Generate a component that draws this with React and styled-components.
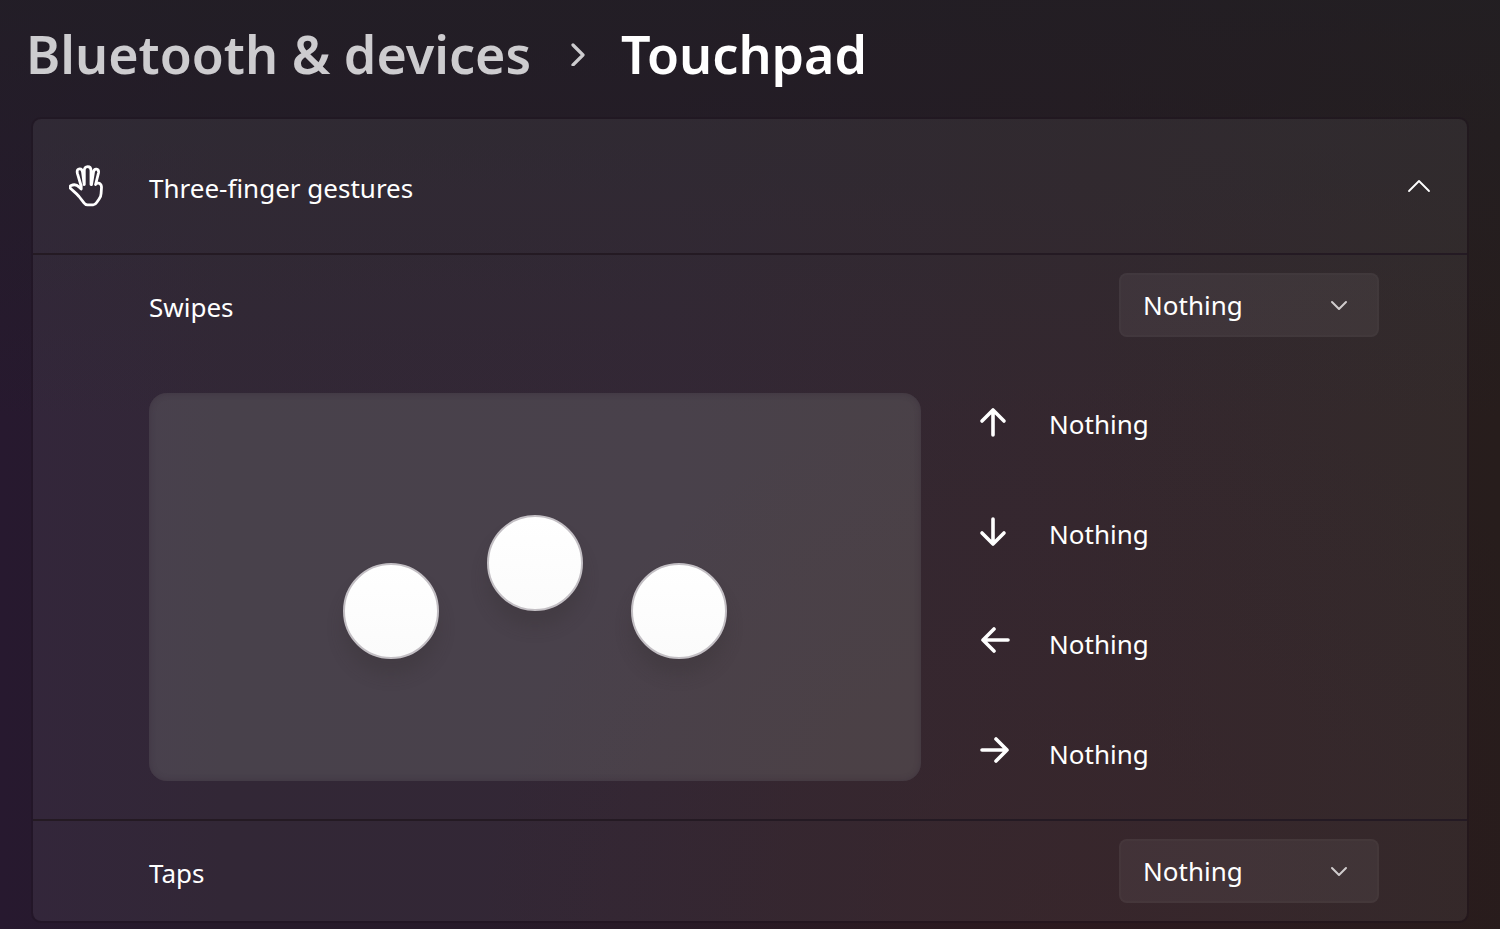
import React from "react";
import styled, { createGlobalStyle } from "styled-components";

const GlobalStyle = createGlobalStyle`
  *, *::before, *::after { box-sizing: border-box; }
  body {
    margin: 0;
    background: #261b26;
    color: #ffffff;
    font-family: "Noto Sans", "Open Sans", sans-serif;
    font-size: 26px;
    line-height: 36px;
  }
`;

const Page = styled.main`
  min-height: 100vh;
  padding: 0 33px 8px;
  background:
    linear-gradient(180deg, rgba(33, 31, 36, 0.75) 0, rgba(33, 31, 36, 0) 45%),
    radial-gradient(ellipse 40% 60% at 72% 100%, rgba(45, 25, 29, 0.7), rgba(45, 25, 29, 0) 100%),
    linear-gradient(90deg, #27192f 0%, #261a2a 15%, #271a29 45%, #281a22 72%, #271d1c 100%);
`;

const Breadcrumb = styled.nav`
  display: flex;
  align-items: center;
  height: 119px;
  margin-left: -7px;
  padding-bottom: 12px;
  gap: 36px;
  font-size: 52px;
  line-height: 72px;
  font-weight: 600;
`;

const Parent = styled.a`
  color: #cdcccf;
  text-decoration: none;
`;

const Current = styled.h1`
  margin: 0;
  font-size: inherit;
  font-weight: inherit;
`;

const Icon = styled.svg`
  display: block;
  flex: none;
  fill: none;
  stroke: currentColor;
  stroke-width: ${(p) => p.$weight || 2};
  stroke-linecap: round;
  stroke-linejoin: round;
`;

const Card = styled.section`
  border-radius: 8px;
  background: rgba(255, 255, 255, 0.06);
  box-shadow: 0 0 0 2px rgba(28, 16, 28, 0.35);
`;

const CardHeader = styled.button`
  display: flex;
  align-items: center;
  width: 100%;
  height: 134px;
  padding: 0 36px;
  gap: 44px;
  border: 0;
  background: none;
  color: inherit;
  font: inherit;
  text-align: left;
`;

const HeaderTitle = styled.span`
  flex: 1;
  padding-top: 4px;
`;

const Section = styled.div`
  padding: 18px 88px ${(p) => (p.$expanded ? 38 : 18)}px 116px;
  border-top: 2px solid #241a23;
`;

const SettingRow = styled.div`
  display: flex;
  align-items: center;
  justify-content: space-between;
`;

const Label = styled.label`
  padding-top: 4px;
`;

const SelectBox = styled.div`
  display: grid;
  align-items: center;
  width: 260px;
  height: 64px;
  color: #d0cccd;

  > * { grid-area: 1 / 1; }
  > svg { justify-self: end; margin-right: 30px; pointer-events: none; }
`;

const Select = styled.select`
  appearance: none;
  width: 100%;
  height: 100%;
  padding: 0 56px 0 22px;
  border: 2px solid rgba(255, 255, 255, 0.02);
  border-radius: 8px;
  background: rgba(255, 255, 255, 0.06);
  color: #ffffff;
  font: inherit;

  option { background: #3b3237; }
`;

const Gestures = styled.div`
  display: flex;
  gap: 58px;
  margin-top: 56px;
`;

const Pad = styled.div`
  display: flex;
  align-items: center;
  justify-content: center;
  flex: 0 1 772px;
  height: 388px;
  border-radius: 18px;
  background: rgba(126, 127, 126, 0.3);
  box-shadow: inset 0 0 6px rgba(52, 38, 53, 0.45);
`;

const Fingers = styled.div`
  display: flex;
  align-items: flex-end;
  height: 144px;
  gap: 48px;
`;

const Finger = styled.span`
  width: 96px;
  height: 96px;
  align-self: ${(p) => (p.$raised ? "flex-start" : "flex-end")};
  border: 2px solid #c3bfc4;
  border-radius: 50%;
  background: linear-gradient(#ffffff, #fbfbfb);
  box-shadow: 0 16px 16px rgba(56, 50, 54, 0.32);
`;

const Directions = styled.ul`
  display: flex;
  flex-direction: column;
  gap: 52px;
  margin: 0;
  padding: 0;
  list-style: none;
`;

const Direction = styled.li`
  display: flex;
  align-items: center;
  height: 58px;
  gap: 38px;
`;

const DirectionText = styled.span`
  padding-top: 4px;
`;

const arrows = {
  up: "M14 28V3M3 14L14 3l11 11",
  down: "M14 2v25M3 16l11 11 11-11",
  left: "M29 13H4M15 2L4 13l11 11",
  right: "M3 13h25M17 2l11 11-11 11",
};

function Arrow({ direction }) {
  return (
    <Icon width="32" height="30" viewBox="0 0 32 30" $weight={3.6} role="img" aria-label={direction}>
      <path d={arrows[direction]} />
    </Icon>
  );
}

function Hand() {
  return (
    <Icon width="36" height="44" viewBox="1 0 36 44" $weight={2.8} aria-hidden="true">
      <path d="M13 21.5L9.4 9.3C8.6 6 10 4.800 11.800 4.900c1.800.1 2.600 1.500 2.800 3.400L16.200 20.500M16.300 20.500V6.600c0-2.500 1.200-4 3.400-4s3.300 1.500 3.300 4v13.900M23.500 20.500L25.500 8c.4-2.100 1.500-3 3-2.800 1.700.3 2.300 1.700 2 3.600L27.600 20.500M27.600 20.500c1-1.500 3.300-2 4.700-.6.900.9 1.300 2 1.200 3.600l-.4 6c-.1 2-.6 3.600-1.800 5.200l-2.800 4c-.8 1.500-1.700 2.100-3.300 2.100h-5.700c-1.700 0-2.800-.8-3.700-2.100L11 32.500c-1.700-2-3.400-3.700-5.200-5.200L2.900 24.800c-1.300-1.200-1.200-2.500.2-3.200 2.400-1.200 5.800-.9 8.200 1.600L13.200 25V21.500" />
    </Icon>
  );
}

function Setting({ id, label }) {
  return (
    <SettingRow>
      <Label htmlFor={id}>{label}</Label>
      <SelectBox>
        <Select id={id} defaultValue="Nothing">
          <option>Nothing</option>
        </Select>
        <Icon width="20" height="12" viewBox="0 0 20 12" aria-hidden="true">
          <path d="M3 3l7 7 7-7" />
        </Icon>
      </SelectBox>
    </SettingRow>
  );
}

export default function App() {
  return (
    <>
      <GlobalStyle />
      <Page>
        <Breadcrumb aria-label="Breadcrumb">
          <Parent href="#devices">Bluetooth &amp; devices</Parent>
          <Icon width="18" height="24" viewBox="0 0 18 24" $weight={3.2} color="#cdcccf" aria-hidden="true">
            <path d="M6 4l10 10L6 24" transform="translate(0 -1)" />
          </Icon>
          <Current>Touchpad</Current>
        </Breadcrumb>
        <Card>
          <CardHeader type="button" aria-expanded="true">
            <Hand />
            <HeaderTitle>Three-finger gestures</HeaderTitle>
            <Icon width="24" height="14" viewBox="0 0 24 14" $weight={1.8} aria-hidden="true">
              <path d="M2 12L12 2l10 10" />
            </Icon>
          </CardHeader>
          <Section $expanded>
            <Setting id="swipes" label="Swipes" />
            <Gestures>
              <Pad>
                <Fingers>
                  <Finger />
                  <Finger $raised />
                  <Finger />
                </Fingers>
              </Pad>
              <Directions>
                {Object.keys(arrows).map((direction) => (
                  <Direction key={direction}>
                    <Arrow direction={direction} />
                    <DirectionText>Nothing</DirectionText>
                  </Direction>
                ))}
              </Directions>
            </Gestures>
          </Section>
          <Section>
            <Setting id="taps" label="Taps" />
          </Section>
        </Card>
      </Page>
    </>
  );
}
